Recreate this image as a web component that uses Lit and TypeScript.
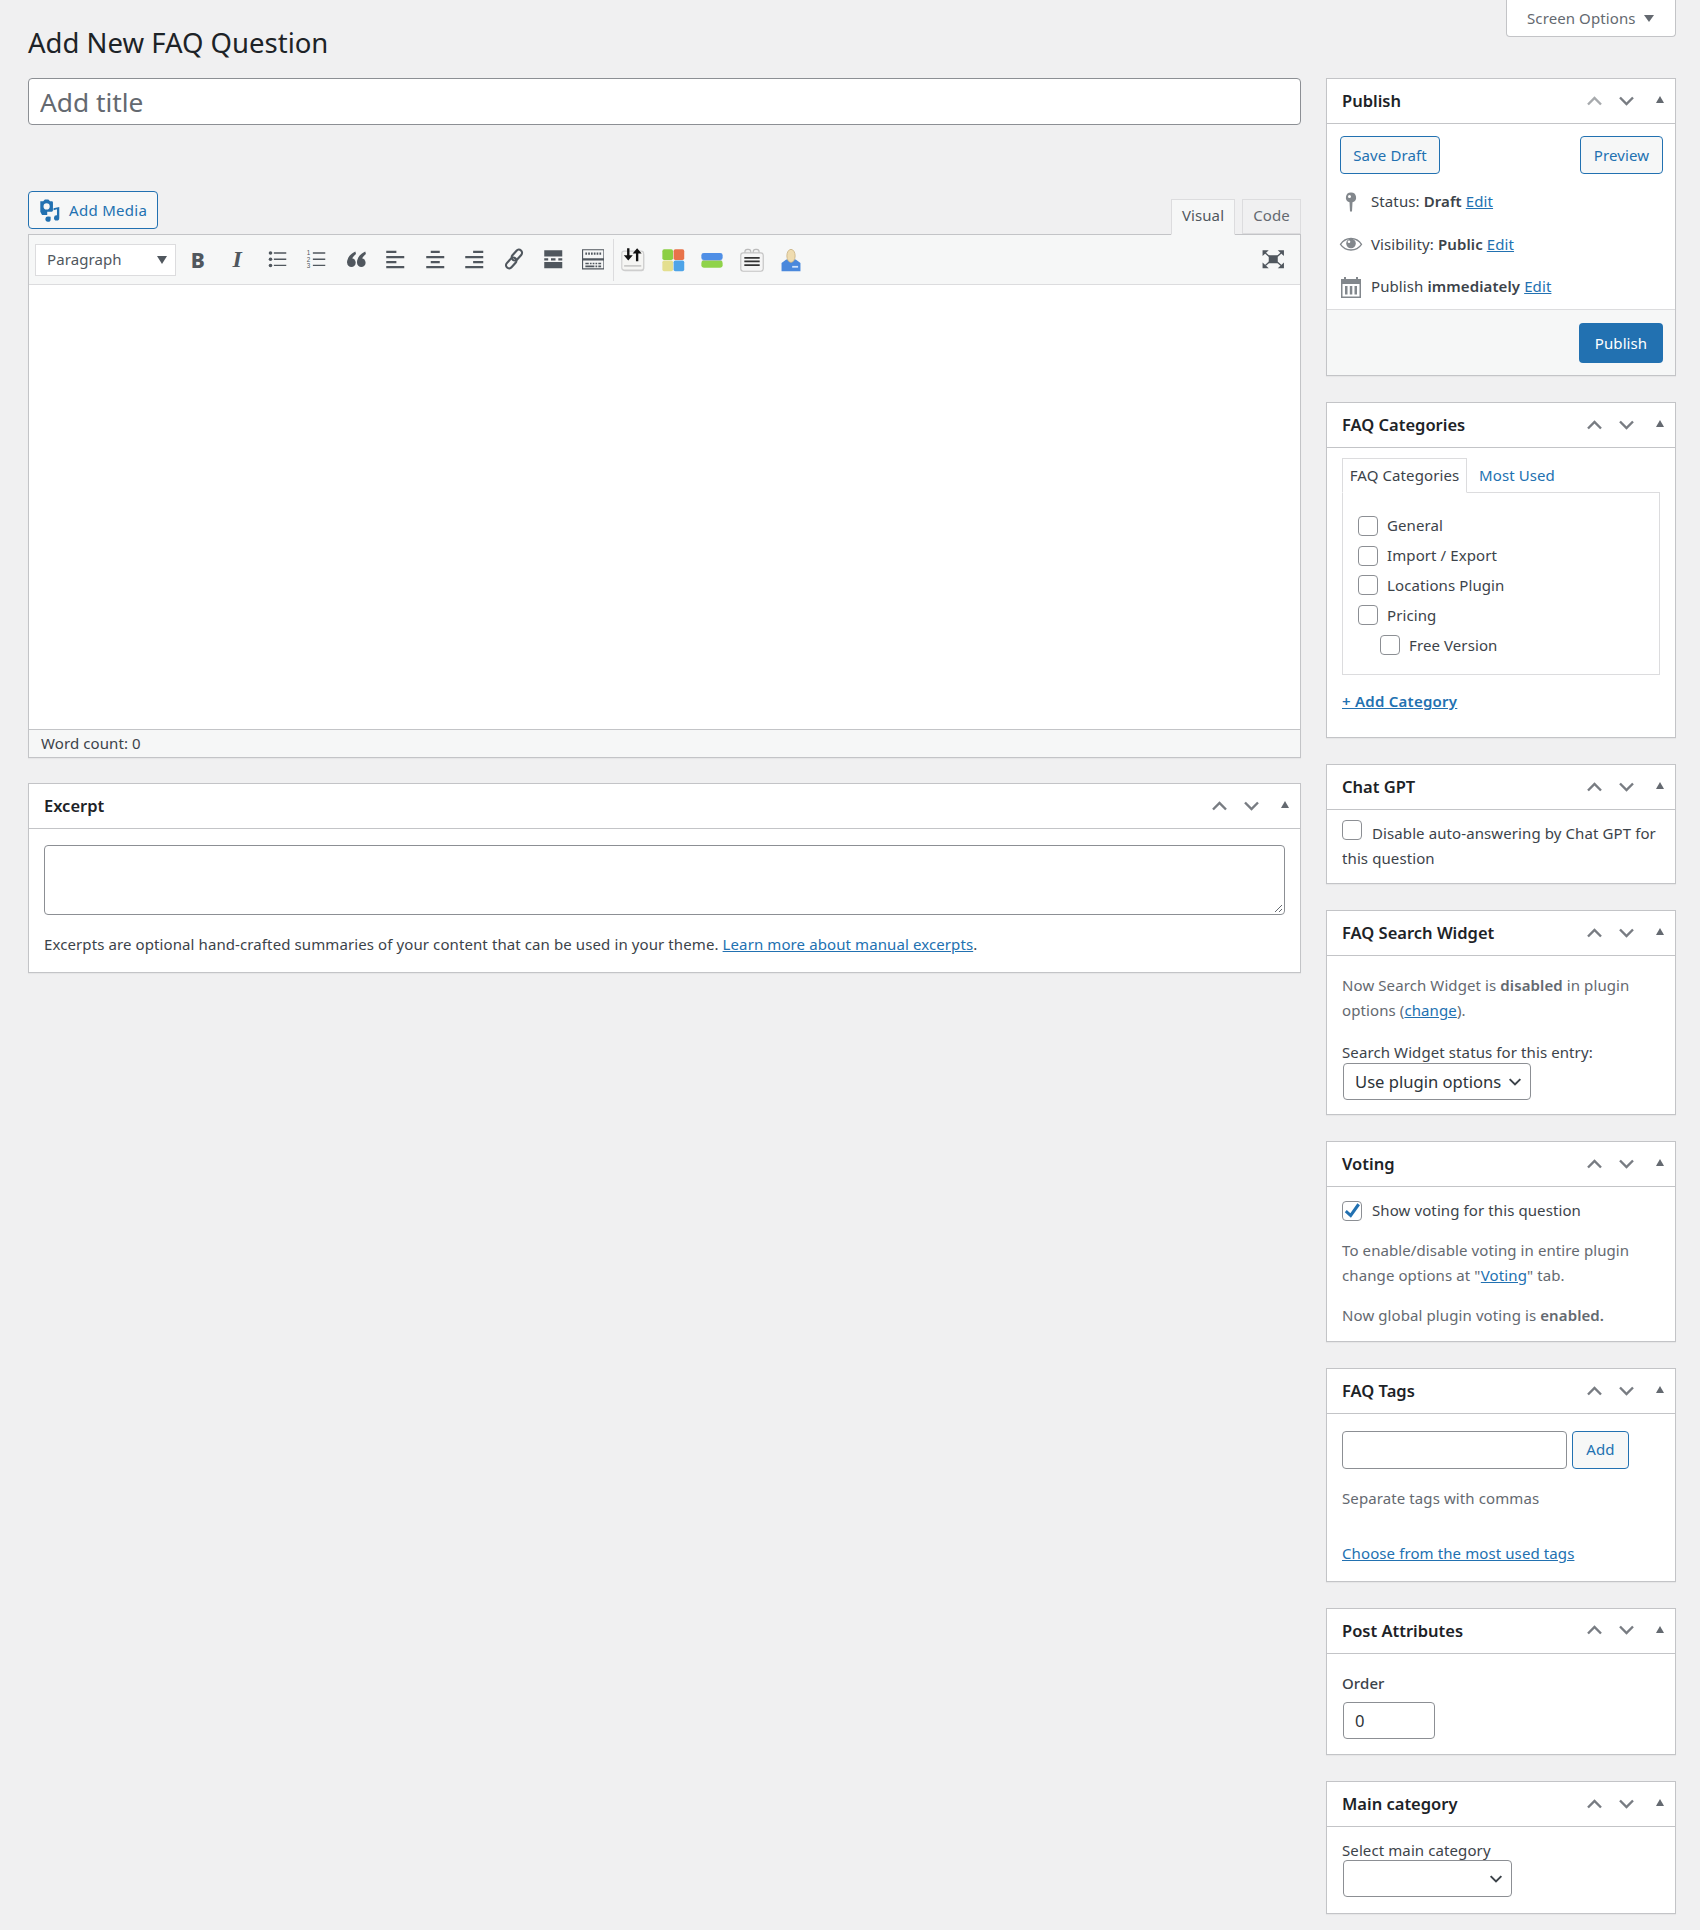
import { LitElement, html, css, svg } from "lit";
import { customElement } from "lit/decorators.js";

const chevUp = svg`<path d="M2 9.500 8.500 3 15 9.500" fill="none" stroke="currentColor" stroke-width="2.400"/>`;
const chevDown = svg`<path d="M2 2.500 8.500 9 15 2.500" fill="none" stroke="currentColor" stroke-width="2.400"/>`;

const ICONS: Record<string, any> = {
  ul: svg`<circle cx="4" cy="4.500" r="1.600"/><circle cx="4" cy="10" r="1.600"/><circle cx="4" cy="15.500" r="1.600"/><path d="M7 3.800h11v1.300H7zM7 9.300h11v1.300H7zM7 14.800h11v1.300H7z"/>`,
  ol: svg`<path d="M7 3.800h11v1.300H7zM7 9.300h11v1.300H7zM7 14.800h11v1.300H7z"/><text x="1.500" y="6.400" font-size="5.600" font-family="Liberation Sans">1</text><text x="1.500" y="12" font-size="5.600" font-family="Liberation Sans">2</text><text x="1.500" y="17.600" font-size="5.600" font-family="Liberation Sans">3</text>`,
  quote: svg`<circle cx="5.700" cy="13" r="3.800"/><circle cx="14.500" cy="13" r="3.800"/><path d="M9.200 3C5 5 1.900 8.500 1.900 13h3.600C5.500 10 7 7.500 9.800 5.300zM18 3c-4.200 2-7.300 5.500-7.300 10h3.600c0-3 1.500-5.500 4.300-7.700z"/>`,
  left: svg`<path d="M2 2.500h9v2H2zM2 7h16v2H2zM2 11.500h9v2H2zM2 16h16v2H2z"/>`,
  center: svg`<path d="M6 2.500h8v2H6zM2 7h16v2H2zM6 11.500h8v2H6zM2 16h16v2H2z"/>`,
  right: svg`<path d="M9 2.500h9v2H9zM2 7h16v2H2zM9 11.500h9v2H9zM2 16h16v2H2z"/>`,
  link: svg`<g fill="none" stroke="currentColor" stroke-width="1.900"><rect x="9.500" y="0.800" width="5.600" height="11" rx="2.800" transform="rotate(42 12.300 6.300)"/><rect x="4.500" y="7.800" width="5.600" height="11" rx="2.800" transform="rotate(42 7.300 13.300)"/></g>`,
  more: svg`<path d="M2 2h16v5.500H2zM2 12.500h16V18H2zM2 9h3.500v2H2zM8 9h4v2H8zM14.500 9H18v2h-3.500z"/>`,
  sink: svg`<path fill-rule="evenodd" d="M0 1h20v18H0zM1 2v7h18V2zM1 11v7h18v-7z"/><path d="M3 4h1.500v2H3zM5.500 4H7v2H5.500zM8 4h1.500v2H8zM10.500 4H12v2h-1.500zM13 4h1.500v2H13zM15.500 4H17v2h-1.500zM3 13h3v1.500H3zM7 13h1.500v1.500H7zM9.500 13h1.500v1.500H9.500zM12 13h1.500v1.500H12zM14.500 13H17v1.500h-2.500zM3 15.500h8v1.500H3zM12 15.500h1.500v1.500H12zM14.500 15.500H17v1.500h-2.500z"/>`,
  full: svg`<path d="M6 6.500h8v7H6zM.5 2h5.500L.5 7.200zM19.500 2H14l5.500 5.200zM.5 18H6L.5 12.800zM19.500 18H14l5.500-5.200z"/><path d="M3 4.500 6.500 7.500M17 4.500l-3.500 3M3 15.500l3.500-3M17 15.500l-3.500-3" stroke="currentColor" stroke-width="1.200" fill="none"/>`,
};

const PLUGIN_ICONS = [
  svg`<rect x="2" y="4.500" width="18.500" height="16" rx="2" fill="#c9c9c9"/><rect x="1.500" y="3.500" width="18.500" height="16" rx="2" fill="#f5f5f3" stroke="#d0d0d0"/><path d="M3.500 15.500h14.500v1H3.500z" fill="#b5b5b5"/><path d="M6 1h2v6h2.800L7 11.500 3.200 7H6zM13.500 12V5.500h-2.800L14.500 1l3.800 4.500h-2.800V12z" fill="#111"/>`,
  svg`<rect x="2" y="2" width="9" height="9" rx="1.500" fill="#8ccf44"/><rect x="11.500" y="2" width="9" height="9" rx="1.500" fill="#e8734a"/><rect x="2" y="11.500" width="9" height="9" rx="1.500" fill="#e4df8f"/><rect x="11.500" y="11.500" width="9" height="9" rx="1.500" fill="#4ea4e8"/>`,
  svg`<rect x="2" y="5" width="18" height="6" rx="2" fill="#4f8fe6"/><rect x="2" y="11.500" width="18" height="6" rx="2" fill="#8fd34a"/><path d="M3 11h16v.5H3z" fill="#8aa"/>`,
  svg`<rect x="5" y="2" width="5" height="5" rx="2" fill="#eee" stroke="#bbb"/><rect x="12" y="2" width="5" height="5" rx="2" fill="#eee" stroke="#bbb"/><rect x="1.500" y="5" width="19" height="15.500" rx="2" fill="#f5f5f5" stroke="#c4c4c4"/><path d="M4.500 8.500h13v1.500h-13zM4.500 11.500h13v1.500h-13zM4.500 14.500h13v1.500h-13z" fill="#333"/>`,
  svg`<path d="M3 20.500V13.500l4-3h8l4 3v7z" fill="#4a88dc"/><ellipse cx="11" cy="7.500" rx="3.500" ry="5.500" fill="#efdcb0" stroke="#c9b383" stroke-width=".7"/><path d="M12 16h5v1.500h-5z" fill="#cfe2fb"/>`,
];

@customElement("app-root")
export class AppRoot extends LitElement {
  static styles = css`
    :host {
      display: block;
      width: 1700px;
      min-height: 1930px;
      box-sizing: border-box;
      background: #f0f0f1;
      color: #3c434a;
      font-family: "Noto Sans", "Open Sans", sans-serif;
      font-size: 15px;
      letter-spacing: 0.1px;
      line-height: 25px;
    }
    * { box-sizing: border-box; }
    a { color: #2271b1; text-decoration: underline; }
    b { font-weight: 600; }
    .page {
      display: grid;
      grid-template-columns: 1273px 350px;
      grid-template-rows: 78px auto;
      column-gap: 25px;
      padding-left: 28px;
    }
    h1 {
      margin: 0;
      padding-top: 25px;
      font-size: 27.500px;
      line-height: 36px;
      font-weight: 400;
      letter-spacing: 0;
      color: #1d2327;
    }
    .screen-row { display: flex; justify-content: flex-end; align-items: flex-start; }
    .screen {
      width: 170px;
      height: 37px;
      display: flex;
      align-items: center;
      gap: 8px;
      padding: 0 0 0 20px;
      background: #fff;
      border: 1px solid #c3c4c7;
      border-top: 0;
      border-radius: 0 0 4px 4px;
      color: #646970;
    }
    .tri-down { width: 0; height: 0; border: 5px solid transparent; border-top: 7px solid #646970; border-bottom: 0; }
    .title {
      display: block;
      width: 100%;
      height: 47px;
      padding: 1px 11px 0;
      border: 1px solid #8c8f94;
      border-radius: 4px;
      background: #fff;
      font: 400 26.300px "Noto Sans", sans-serif;
      color: #3c434a;
      outline: none;
    }
    .title::placeholder { color: #646970; opacity: 1; }
    .media-row { display: flex; justify-content: space-between; align-items: flex-end; margin-top: 66px; height: 43px; position: relative; z-index: 1; }
    .btn {
      display: inline-flex;
      align-items: center;
      justify-content: center;
      height: 38px;
      border: 1px solid #2271b1;
      border-radius: 4px;
      background: #f6f7f7;
      color: #2271b1;
    }
    .add-media { width: 130px; gap: 7px; align-self: flex-start; justify-content: flex-start; padding-left: 9px; letter-spacing: .3px; }
    .add-media svg { width: 23px; height: 23px; margin-right: 1px; }
    .tabs { display: flex; gap: 7px; align-items: flex-end; }
    .tab {
      height: 35px;
      padding-bottom: 2px;
      display: flex;
      align-items: center;
      justify-content: center;
      border: 1px solid #dcdcde;
      color: #646970;
      background: #f0f0f1;
    }
    .tab.on { width: 64px; background: #f6f7f7; color: #50575e; border-bottom-color: #f6f7f7; height: 36px; margin-bottom: -1px; padding-bottom: 3px; }
    .tab.off { width: 59px; }
    .editor { border: 1px solid #c3c4c7; background: #fff; box-shadow: 0 1px 1px rgba(0,0,0,.04); }
    .toolbar {
      height: 50px;
      display: flex;
      align-items: center;
      padding: 0 7px 0 6px;
      background: #f6f7f7;
      border-bottom: 1px solid #dcdcde;
    }
    .format {
      width: 141px;
      height: 32px;
      display: flex;
      align-items: center;
      justify-content: space-between;
      padding: 0 8px 0 11px;
      margin-right: 2px;
      background: #fff;
      border: 1px solid #dcdcde;
      color: #50575e;
    }
    .format .tri-down { border-top-color: #50575e; border-top-width: 8px; }
    .tb {
      width: 39.500px;
      height: 30px;
      display: flex;
      align-items: center;
      justify-content: center;
      color: #50575e;
      flex: none;
    }
    .tb svg { width: 22.500px; height: 22.500px; fill: currentColor; display: block; }
    .tb.plug svg { width: 26px; height: 26px; }
    .tb .b { font: 800 21px "Noto Sans", sans-serif; }
    .tb .i { font: italic 700 24px "Liberation Serif", serif; }
    .group { display: flex; align-items: center; height: 42px; border-left: 1px solid #dcdcde; }
    .spacer { flex: 1; }
    .content { height: 444px; background: #fff; }
    .status { height: 28px; display: flex; align-items: center; padding: 0 12px; background: #f6f7f7; border-top: 1px solid #c3c4c7; }
    .box {
      background: #fff;
      border: 1px solid #c3c4c7;
      box-shadow: 0 1px 1px rgba(0,0,0,.04);
    }
    .main .box { margin-top: 25px; }
    .side { display: flex; flex-direction: column; gap: 26px; padding-bottom: 17px; }
    .head {
      height: 45px;
      display: flex;
      align-items: center;
      justify-content: space-between;
      padding: 0 11px 1px 15px;
      border-bottom: 1px solid #c3c4c7;
    }
    h2 { margin: 0; font-size: 16.500px; line-height: 25px; font-weight: 600; letter-spacing: 0; color: #1d2327; }
    .ctrl { display: flex; align-items: center; color: #787c82; }
    .ctrl svg { width: 17px; height: 12px; display: block; }
    .ctrl .gap { margin-left: 15px; }
    .ctrl .dis { color: #a7aaad; }
    .tri-up { margin-left: 21px; width: 0; height: 0; border: 4.500px solid transparent; border-bottom: 7px solid #646970; border-top: 0; margin-top: -2px; }
    .pub-body { padding: 12px 12px 0 13px; height: 185px; }
    .pub-btns { display: flex; justify-content: space-between; }
    .pub-btns .btn:first-child { width: 100px; }
    .pub-btns .btn:last-child { width: 83px; }
    .pub-rows { display: flex; flex-direction: column; gap: 17.500px; margin-top: 15px; }
    .pub-row { display: flex; align-items: center; height: 25px; }
    .pub-row svg { width: 24px; height: 24px; margin-right: 8px; flex: none; fill: #82878c; margin-left: -1px; }
    .pub-row span { white-space: pre; }
    .pub-foot { height: 66px; padding: 13px 12px; display: flex; justify-content: flex-end; background: #f6f7f7; border-top: 1px solid #dcdcde; }
    .primary { width: 84px; height: 40px; background: #2271b1; color: #fff; border-radius: 4px; display: flex; align-items: center; justify-content: center; }
    .body { padding: 0 15px; }
    .cat-tabs { display: flex; align-items: flex-end; padding-top: 10px; height: 45px; position: relative; z-index: 1; margin-bottom: -1px; }
    .cat-tab { width: 125px; height: 35px; display: flex; align-items: center; justify-content: center; border: 1px solid #dcdcde; border-bottom-color: #fff; background: #fff; }
    .cat-tabs a { margin-left: 12px; margin-bottom: 5px; text-decoration: none; }
    .cat-panel { height: 183px; padding: 18px 15px 0; border: 1px solid #dcdcde; }
    .cat { display: flex; align-items: center; gap: 9px; height: 29.800px; }
    .cat.sub { padding-left: 22px; }
    .cb {
      width: 20px; height: 20px; flex: none;
      display: inline-block;
      border: 1px solid #8c8f94;
      border-radius: 4px;
      background: #fff;
    }
    .cb svg { display: block; width: 18px; height: 18px; fill: #2271b1; overflow: visible; }
    .add-cat { margin: 14px 0 23px; font-weight: 600; letter-spacing: .25px; }
    .chat { padding-top: 10px; padding-bottom: 12px; }
    .chat .cb { margin-right: 10px; vertical-align: -1px; }
    .row-cb { display: flex; align-items: center; gap: 10px; padding-top: 11px; }
    p { margin: 0; }
    .muted { color: #646970; }
    .select {
      display: flex;
      align-items: center;
      justify-content: space-between;
      margin-left: 1px;
      height: 37px;
      padding: 0 8px 0 11px;
      background: #fff;
      border: 1px solid #8c8f94;
      border-radius: 4px;
      font-size: 16.600px;
      letter-spacing: 0;
      color: #2c3338;
    }
    .select svg { width: 14px; height: 10px; color: #3c434a; }
    .search { padding-top: 17px; padding-bottom: 14px; }
    .search label { display: block; margin-top: 17px; }
    .search .select { width: 188px; margin-top: -2px; }
    .voting { padding-bottom: 13px; }
    .voting p { margin-top: 15px; }
    .tags { padding-top: 17px; padding-bottom: 14.500px; }
    .tag-row { display: flex; gap: 5px; }
    .input { height: 37.500px; border: 1px solid #8c8f94; border-radius: 4px; background: #fff; }
    .tag-row .input { width: 225px; }
    .tag-row .btn { width: 57px; height: 37.500px; }
    .tags p { margin-top: 17.500px; }
    .tags .choose { display: block; margin-top: 30px; }
    .attrs { padding-top: 17px; padding-bottom: 15px; }
    .order { font-weight: 500; }
    .num { width: 92px; margin: 6px 0 0 1px; padding: 0 11px; display: flex; align-items: center; font-size: 16.600px; color: #2c3338; }
    .maincat { padding-top: 11px; padding-bottom: 16px; }
    .maincat .select { width: 169px; margin-top: -3px; }
    .excerpt { padding: 16px 15px 0; height: 143px; }
    .ta { height: 70px; border: 1px solid #8c8f94; border-radius: 4px; position: relative; }
    .ta svg { position: absolute; right: 1px; bottom: 1px; width: 10px; height: 10px; }
    .excerpt p { margin-top: 17px; }
  `;

  private head(title: string, disUp = false) {
    return html`<div class="head">
      <h2>${title}</h2>
      <div class="ctrl">
        <svg viewBox="0 0 17 12" class=${disUp ? "dis" : ""}>${chevUp}</svg>
        <svg viewBox="0 0 17 12" class="gap">${chevDown}</svg>
        <span class="tri-up"></span>
      </div>
    </div>`;
  }

  private tb(name: string) {
    return html`<div class="tb"><svg viewBox="0 0 20 20">${ICONS[name]}</svg></div>`;
  }

  private select(text: string) {
    return html`<div class="select"><span>${text}</span><svg viewBox="0 0 17 12">${chevDown}</svg></div>`;
  }

  render() {
    const cats = [
      ["General", false],
      ["Import / Export", false],
      ["Locations Plugin", false],
      ["Pricing", false],
      ["Free Version", true],
    ] as const;
    return html`<div class="page">
      <h1>Add New FAQ Question</h1>
      <div class="screen-row"><div class="screen">Screen Options <span class="tri-down"></span></div></div>

      <div class="main">
        <input class="title" placeholder="Add title" />
        <div class="media-row">
          <div class="btn add-media">
            <svg viewBox="0 0 20 20" fill="#2271b1"><path fill-rule="evenodd" d="M2 2h2.500L6 .5h3L10.500 2H12a1 1 0 0 1 1 1v7a1 1 0 0 1-1 1H8v3H3.500L2 11zM7.500 3.800a2.700 2.700 0 1 0 0 5.400 2.700 2.700 0 0 0 0-5.400z"/><path d="M18.500 7v9.500a2.300 2.300 0 1 1-2-2.300V9l-3 .8V8zM11 15.500v2a2.300 2.300 0 1 1-2-2.300z"/></svg>
            Add Media
          </div>
          <div class="tabs"><div class="tab on">Visual</div><div class="tab off">Code</div></div>
        </div>
        <div class="editor">
          <div class="toolbar">
            <div class="format">Paragraph <span class="tri-down"></span></div>
            <div class="tb"><span class="b">B</span></div>
            <div class="tb"><span class="i">I</span></div>
            ${["ul", "ol", "quote", "left", "center", "right", "link", "more", "sink"].map((n) => this.tb(n))}
            <div class="group">
              ${PLUGIN_ICONS.map((i) => html`<div class="tb plug"><svg viewBox="0 0 22 22">${i}</svg></div>`)}
            </div>
            <div class="spacer"></div>
            ${this.tb("full")}
          </div>
          <div class="content"></div>
          <div class="status">Word count: 0</div>
        </div>
        <div class="box">
          ${this.head("Excerpt")}
          <div class="excerpt">
            <div class="ta"><svg viewBox="0 0 10 10"><path d="M9 2 2 9M9 6 6 9" stroke="#646970" fill="none"/></svg></div>
            <p>Excerpts are optional hand-crafted summaries of your content that can be used in your theme. <a>Learn more about manual excerpts</a>.</p>
          </div>
        </div>
      </div>

      <div class="side">
        <div class="box">
          ${this.head("Publish", true)}
          <div class="pub-body">
            <div class="pub-btns"><div class="btn">Save Draft</div><div class="btn">Preview</div></div>
            <div class="pub-rows">
              <div class="pub-row">
                <svg viewBox="0 0 24 24"><path fill-rule="evenodd" d="M12 2.500a5 5 0 0 1 1.500 9.800l-.5 9.200h-2l-.5-9.200A5 5 0 0 1 12 2.500zm-1.500 2.500a1.500 1.500 0 1 0 0 3 1.500 1.500 0 0 0 0-3z"/></svg>
                <span>Status: <b>Draft</b> <a>Edit</a></span>
              </div>
              <div class="pub-row">
                <svg viewBox="0 0 24 24"><path d="M1.500 12.300C4 8.500 7.800 6.500 12 6.500s8 2 10.500 5.800C20 16 16.200 18 12 18S4 16 1.500 12.300z" fill="none" stroke="#82878c" stroke-width="1.300"/><circle cx="12" cy="11.500" r="4.800"/><circle cx="10" cy="9.800" r="1.300" fill="#fff"/></svg>
                <span>Visibility: <b>Public</b> <a>Edit</a></span>
              </div>
              <div class="pub-row">
                <svg viewBox="0 0 24 24"><path fill-rule="evenodd" d="M2 4h3V2h2v2h10V2h2v2h3v19H2zM3.500 9v12.500h17V9zM6 11h2.500v8.500H6zM10.800 11h2.500v8.500h-2.500zM15.500 11H18v8.500h-2.500z"/></svg>
                <span>Publish <b>immediately</b> <a>Edit</a></span>
              </div>
            </div>
          </div>
          <div class="pub-foot"><div class="primary">Publish</div></div>
        </div>

        <div class="box">
          ${this.head("FAQ Categories")}
          <div class="body">
            <div class="cat-tabs"><div class="cat-tab">FAQ Categories</div><a>Most Used</a></div>
            <div class="cat-panel">
              ${cats.map(([n, sub]) => html`<div class="cat ${sub ? "sub" : ""}"><span class="cb"></span>${n}</div>`)}
            </div>
            <div class="add-cat"><a>+ Add Category</a></div>
          </div>
        </div>

        <div class="box">
          ${this.head("Chat GPT")}
          <div class="body chat"><span class="cb"></span>Disable auto-answering by Chat GPT for this question</div>
        </div>

        <div class="box">
          ${this.head("FAQ Search Widget")}
          <div class="body search">
            <p class="muted">Now Search Widget is <b>disabled</b> in plugin options (<a>change</a>).</p>
            <label>Search Widget status for this entry:</label>
            ${this.select("Use plugin options")}
          </div>
        </div>

        <div class="box">
          ${this.head("Voting")}
          <div class="body voting">
            <div class="row-cb"><span class="cb"><svg viewBox="0 0 20 20"><path d="M16 1.500 18.800 3.500 8.800 17.500 2 11.500l2.200-2.500 4 3.500z"/></svg></span>Show voting for this question</div>
            <p class="muted">To enable/disable voting in entire plugin change options at "<a>Voting</a>" tab.</p>
            <p class="muted">Now global plugin voting is <b>enabled.</b></p>
          </div>
        </div>

        <div class="box">
          ${this.head("FAQ Tags")}
          <div class="body tags">
            <div class="tag-row"><div class="input"></div><div class="btn">Add</div></div>
            <p class="muted">Separate tags with commas</p>
            <a class="choose">Choose from the most used tags</a>
          </div>
        </div>

        <div class="box">
          ${this.head("Post Attributes")}
          <div class="body attrs">
            <div class="order">Order</div>
            <div class="input num">0</div>
          </div>
        </div>

        <div class="box">
          ${this.head("Main category")}
          <div class="body maincat">
            <div>Select main category</div>
            ${this.select("")}
          </div>
        </div>
      </div>
    </div>`;
  }
}
